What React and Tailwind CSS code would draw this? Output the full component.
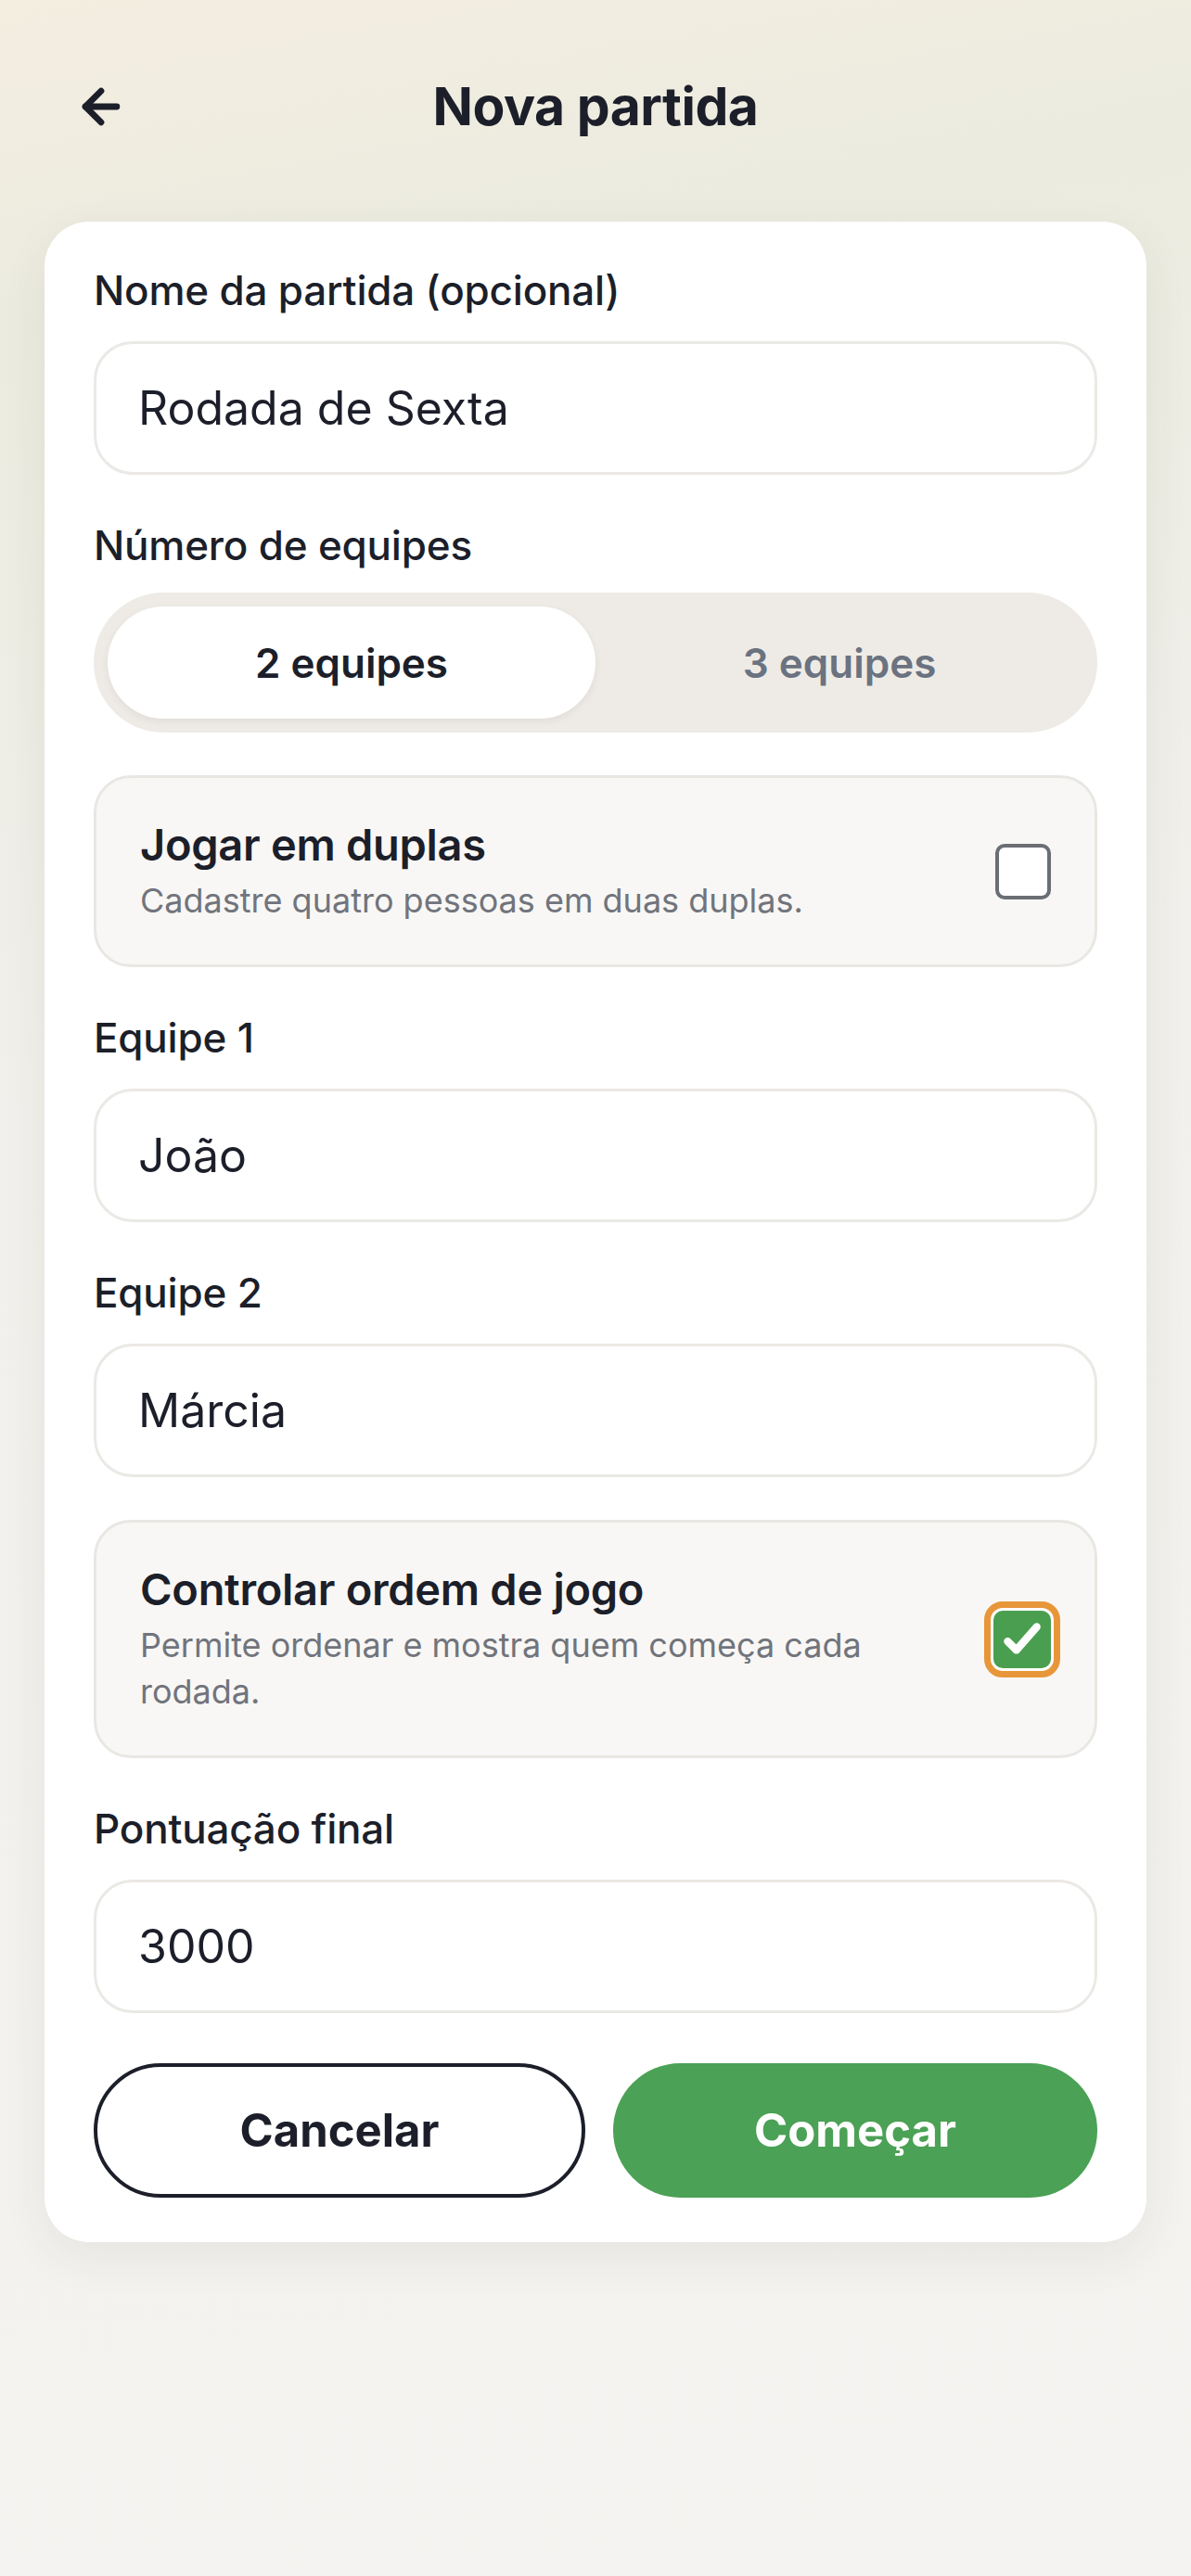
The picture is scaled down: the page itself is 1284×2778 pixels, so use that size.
import React, { useState } from 'react';
import { ArrowLeft } from 'lucide-react';

const font = { fontFamily: 'Inter, "Noto Sans", sans-serif' };

const Field = ({ label, value }) => (
  <div className="flex flex-col">
    <label className="text-[44px] font-medium leading-[60px] text-[#1c1f2a] mb-[25px] tracking-[-0.2px]">{label}</label>
    <div className="h-[144px] rounded-[42px] border-[3px] border-[#ebe9e5] bg-white flex items-center px-[45px]">
      <span className="text-[50px] text-[#1c1f2a]">{value}</span>
    </div>
  </div>
);

const Checkbox = ({ checked }) =>
  checked ? (
    <div className="w-[62px] h-[62px] rounded-[10px] bg-[#4a9e50] flex items-center justify-center ring-[3px] ring-white outline-[7px] outline-solid outline-[#e8963a] outline-offset-[3px] shrink-0">
      <svg width="50" height="50" viewBox="0 0 24 24" fill="none" stroke="white" strokeWidth="4" strokeLinecap="round" strokeLinejoin="round">
        <path d="M4.5 13l4.5 4.5L19.5 5.5" />
      </svg>
    </div>
  ) : (
    <div className="w-[60px] h-[60px] rounded-[10px] border-[4px] border-[#6b6e74] bg-white shrink-0" />
  );

const OptionCard = ({ title, desc, checked }) => (
  <div className="rounded-[40px] border-[3px] border-[#e9e7e3] bg-[#f8f7f5] px-[47px] py-[44px] flex items-center gap-[40px]">
    <div className="flex-1 flex flex-col gap-[7px]">
      <div className="text-[47px] font-semibold leading-[56px] text-[#1c1f2a] tracking-[-0.3px]">{title}</div>
      <div className="text-[36px] leading-[50px] text-[#71747c] pr-[20px]">{desc}</div>
    </div>
    <Checkbox checked={checked} />
  </div>
);

export default function App() {
  const [teams, setTeams] = useState(2);

  return (
    <div style={font} className="min-h-[2778px] w-full bg-[linear-gradient(170deg,#f4eee1_0%,#ebebdf_12%,#f1f0ec_40%,#f4f3f1_100%)] pt-[50px]">
      {/* Header */}
      <div className="h-[130px] relative flex items-center justify-center px-[48px]">
        <button className="absolute left-[80px] text-[#1c1f2a]">
          <ArrowLeft size={58} strokeWidth={2.8} />
        </button>
        <h1 className="text-[57px] font-bold text-[#1c1f2a] tracking-[-0.5px]">Nova partida</h1>
      </div>

      {/* Form card */}
      <div className="mx-[48px] mt-[59px] bg-white rounded-[48px] shadow-[0_16px_50px_rgba(60,50,30,0.07)] px-[53px] pt-[44px] pb-[48px] flex flex-col gap-[46px]">
        <Field label="Nome da partida (opcional)" value="Rodada de Sexta" />

        <div className="flex flex-col">
          <label className="text-[44px] font-medium leading-[60px] text-[#1c1f2a] mb-[21px] tracking-[-0.2px]">Número de equipes</label>
          <div className="h-[151px] rounded-full bg-[#eeebe6] p-[15px] flex">
            {[2, 3].map((n) => (
              <button
                key={n}
                onClick={() => setTeams(n)}
                className={`flex-1 rounded-full text-[44px] font-semibold ${teams === n ? 'bg-white text-[#1c1f2a] shadow-[0_3px_10px_rgba(0,0,0,0.06)]' : 'text-[#6b7280]'}`}
              >
                {n} equipes
              </button>
            ))}
          </div>
        </div>

        <OptionCard title="Jogar em duplas" desc="Cadastre quatro pessoas em duas duplas." checked={false} />

        <Field label="Equipe 1" value="João" />
        <Field label="Equipe 2" value="Márcia" />

        <OptionCard title="Controlar ordem de jogo" desc="Permite ordenar e mostra quem começa cada rodada." checked={true} />

        <Field label="Pontuação final" value="3000" />

        <div className="flex gap-[30px] mt-[8px]">
          <button className="flex-1 h-[145px] rounded-full border-[4px] border-[#1c1f2a] bg-white text-[49px] font-bold text-[#1c1f2a]">
            Cancelar
          </button>
          <button className="flex-1 h-[145px] rounded-full bg-[#4ba155] text-[49px] font-bold text-white">
            Começar
          </button>
        </div>
      </div>
    </div>
  );
}
